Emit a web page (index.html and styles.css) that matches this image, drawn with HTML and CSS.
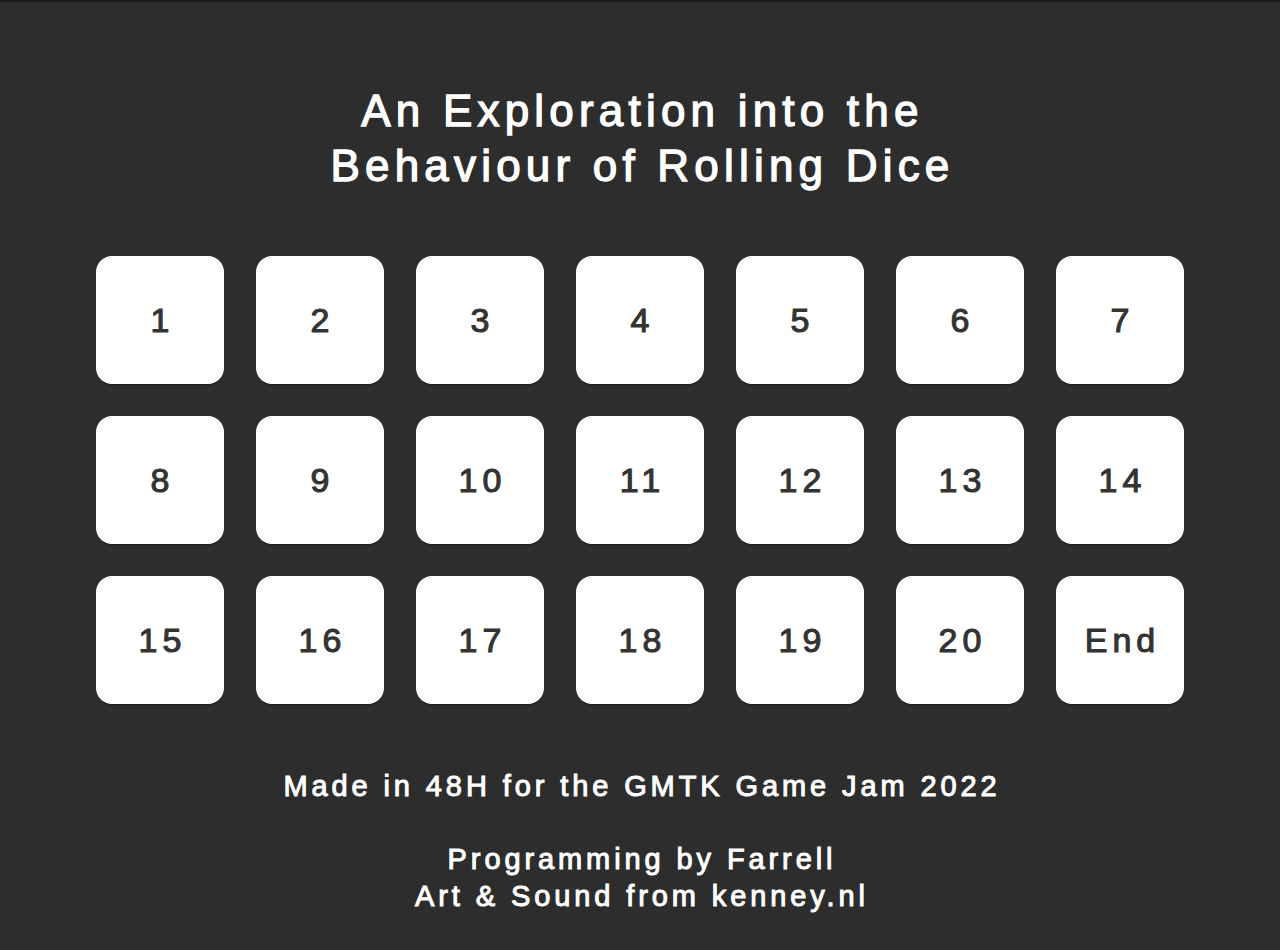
FILE: index.html
```html
<!DOCTYPE html>
<html lang="en">
<head>
  <meta charset="UTF-8">
  <title>An Exploration into the Behaviour of Rolling Dice</title>
  <link rel="stylesheet" href="styles.css">
</head>
<body>

  <div class="screen">
    <h1 class="title">An Exploration into the<br>Behaviour of Rolling Dice</h1>

    <div class="levels">
      <button class="level">1</button>
      <button class="level">2</button>
      <button class="level">3</button>
      <button class="level">4</button>
      <button class="level">5</button>
      <button class="level">6</button>
      <button class="level">7</button>
      <button class="level">8</button>
      <button class="level">9</button>
      <button class="level">10</button>
      <button class="level">11</button>
      <button class="level">12</button>
      <button class="level">13</button>
      <button class="level">14</button>
      <button class="level">15</button>
      <button class="level">16</button>
      <button class="level">17</button>
      <button class="level">18</button>
      <button class="level">19</button>
      <button class="level">20</button>
      <button class="level">End</button>
    </div>

    <div class="credits">
      <p>Made in 48H for the GMTK Game Jam 2022</p>
      <p>Programming by Farrell<br>Art &amp; Sound from kenney.nl</p>
    </div>
  </div>

</body>
</html>
```

FILE: styles.css
```css
body {
  margin: 0;
  padding: 0;
  background: #2d2d2d;
  color: #ffffff;
  font-family: 'Liberation Sans', Arial, sans-serif;
  border-top: 2px solid #1c1c1c;
}

.screen {
  width: 1280px;
  height: 948px;
  display: flex;
  flex-direction: column;
  align-items: center;
}

/* letter-spacing leaves a gap after the last glyph, so pad the left by the same amount.
   The stroke thickens the glyphs without changing their advance. */
.title {
  margin: 81px 0 0;
  padding-left: 5px;
  font-size: 44px;
  font-weight: normal;
  line-height: 55px;
  letter-spacing: 5.2px;
  text-align: center;
  -webkit-text-stroke: 1.3px currentColor;
}

.levels {
  display: grid;
  grid-template-columns: repeat(7, 128px);
  grid-auto-rows: 128px;
  gap: 32px;
  margin-top: 63px;
}

.level {
  background: #ffffff;
  border: none;
  border-radius: 16px;
  box-shadow: 0 1px 1px rgba(0, 0, 0, 0.35);
  color: #333333;
  font-family: inherit;
  font-size: 34px;
  letter-spacing: 5px;
  padding: 0 0 0 5px;
  cursor: pointer;
  -webkit-text-stroke: 1.1px currentColor;
}

.credits {
  margin-top: 64px;
  padding-left: 4px;
  text-align: center;
  font-size: 29px;
  line-height: 37px;
  letter-spacing: 3.9px;
  -webkit-text-stroke: 1px currentColor;
}

.credits p {
  margin: 0 0 36px;
}
```
